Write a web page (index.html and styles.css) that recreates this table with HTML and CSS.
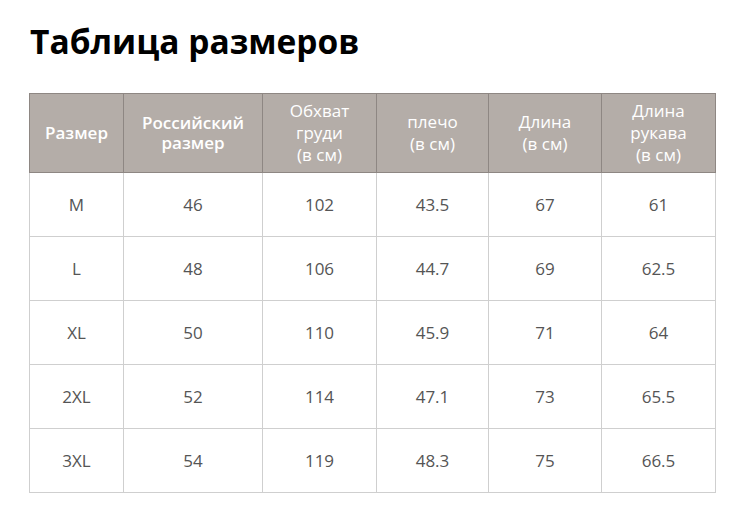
FILE: index.html
```html
<!DOCTYPE html>
<html lang="ru">
<head>
<meta charset="utf-8">
<link rel="stylesheet" href="styles.css">
</head>
<body>
<h1 class="title">Таблица размеров</h1>
<table class="sizes">
  <colgroup>
    <col class="c1"><col class="c2"><col class="c3"><col class="c4"><col class="c5"><col class="c6">
  </colgroup>
  <thead>
    <tr>
      <th class="strong">Размер</th>
      <th class="strong">Российский<br>размер</th>
      <th>Обхват<br>груди<br>(в см)</th>
      <th>плечо<br>(в см)</th>
      <th>Длина<br>(в см)</th>
      <th>Длина<br>рукава<br>(в см)</th>
    </tr>
  </thead>
  <tbody>
    <tr><td>M</td><td>46</td><td>102</td><td>43.5</td><td>67</td><td>61</td></tr>
    <tr><td>L</td><td>48</td><td>106</td><td>44.7</td><td>69</td><td>62.5</td></tr>
    <tr><td>XL</td><td>50</td><td>110</td><td>45.9</td><td>71</td><td>64</td></tr>
    <tr><td>2XL</td><td>52</td><td>114</td><td>47.1</td><td>73</td><td>65.5</td></tr>
    <tr><td>3XL</td><td>54</td><td>119</td><td>48.3</td><td>75</td><td>66.5</td></tr>
  </tbody>
</table>
</body>
</html>
```

FILE: styles.css
```css
html, body {
  margin: 0;
  padding: 0;
  background: #ffffff;
}
body {
  font-family: "Open Sans", "Liberation Sans", sans-serif;
  padding: 19px 0 0 29px;
}
.title {
  margin: 0 0 30px 1px;
  font-size: 33.5px;
  line-height: 44px;
  font-weight: 700;
  color: #000;
  letter-spacing: 0;
}
.sizes {
  border-collapse: collapse;
  table-layout: fixed;
  width: 687px;
}
.c1 { width: 94px; }
.c2 { width: 139px; }
.c3 { width: 114px; }
.c4 { width: 112px; }
.c5 { width: 113px; }
.c6 { width: 114px; }
.sizes th {
  background: #b4ada8;
  color: #ffffff;
  font-weight: 400;
  font-size: 17px;
  line-height: 22px;
  height: 78px;
  padding: 0;
  border: 1px solid #8e8783;
  text-align: center;
  vertical-align: middle;
}
.sizes th.strong {
  font-weight: 600;
  font-size: 17px;
  line-height: 20px;
}
.sizes td {
  height: 63px;
  padding: 0;
  border: 1px solid #cfcfcf;
  text-align: center;
  vertical-align: middle;
  color: #555555;
  font-size: 17px;
}
```
